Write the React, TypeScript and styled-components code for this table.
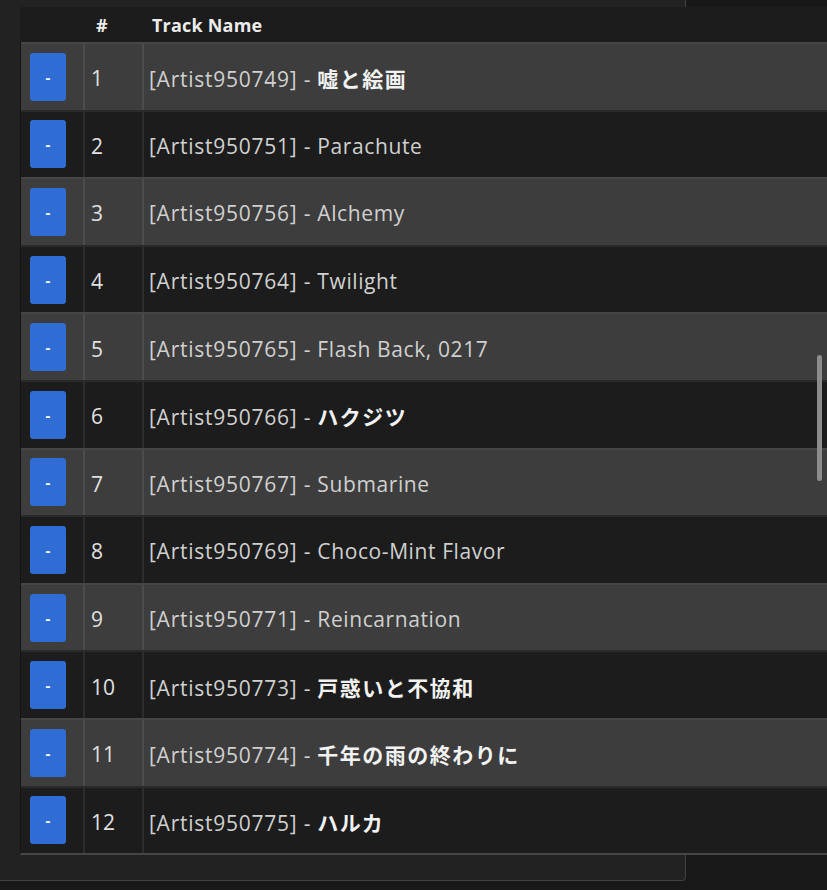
import React from "react";
import styled, { createGlobalStyle } from "styled-components";

const Global = createGlobalStyle`
  html, body { margin: 0; padding: 0; background: #181818; overflow: hidden; }
  body { font-family: "Open Sans", "Noto Sans CJK JP", sans-serif; }
  * { box-sizing: border-box; }
`;

type Track = { artist: string; title: string; jp?: boolean };

const tracks: Track[] = [
  { artist: "Artist950749", title: "嘘と絵画", jp: true },
  { artist: "Artist950751", title: "Parachute" },
  { artist: "Artist950756", title: "Alchemy" },
  { artist: "Artist950764", title: "Twilight" },
  { artist: "Artist950765", title: "Flash Back, 0217" },
  { artist: "Artist950766", title: "ハクジツ", jp: true },
  { artist: "Artist950767", title: "Submarine" },
  { artist: "Artist950769", title: "Choco-Mint Flavor" },
  { artist: "Artist950771", title: "Reincarnation" },
  { artist: "Artist950773", title: "戸惑いと不協和", jp: true },
  { artist: "Artist950774", title: "千年の雨の終わりに", jp: true },
  { artist: "Artist950775", title: "ハルカ", jp: true },
];

const Stage = styled.div`
  position: relative;
  width: 827px;
  height: 890px;
  overflow: hidden;
`;

const Panel = styled.div`
  width: 686px;
  height: 881px;
  background: #222222;
  border-right: 1px solid #414141;
  border-bottom: 1px solid #414141;
  border-bottom-right-radius: 4px;
  padding: 7px 0 0 20px;
`;

const Table = styled.div`
  width: 900px;
  display: flex;
  flex-direction: column;
`;

const Header = styled.div`
  display: grid;
  grid-template-columns: 65px 59px 1fr;
  height: 35px;
  background: #1c1c1c;
  align-items: center;
  color: #ececec;
  font-weight: 700;
  font-size: 18px;
  letter-spacing: 0.2px;
`;

const HeadCell = styled.div<{ $pad?: number }>`
  padding-left: ${(p) => p.$pad ?? 0}px;
`;

const Body = styled.div`
  display: flex;
  flex-direction: column;
  border-left: 1px solid #151515;
  border-bottom: 2px solid #464646;
`;

const Row = styled.div<{ $odd: boolean }>`
  display: grid;
  grid-template-columns: 64px 59px 1fr;
  height: 67.6px;
  background: ${(p) => (p.$odd ? "#3d3d3d" : "#1c1c1c")};
  border-top: 2px solid ${(p) => (p.$odd ? "#464646" : "#2a2a2a")};
`;

const Cell = styled.div`
  display: flex;
  align-items: center;
  border-right: 2px solid rgba(255, 255, 255, 0.08);
  min-width: 0;
`;

const ButtonCell = styled(Cell)`
  padding-left: 9px;
`;

const RemoveButton = styled.button`
  width: 36px;
  height: 48px;
  border: none;
  border-radius: 3px;
  background: #2f6dd4;
  color: #ffffff;
  font-family: "Open Sans", sans-serif;
  font-size: 15px;
  font-weight: 700;
  padding: 0;
  display: flex;
  align-items: center;
  justify-content: center;
`;

const NumCell = styled(Cell)`
  padding: 3px 0 0 6px;
  font-size: 21px;
  color: #e0e0e0;
`;

const NameCell = styled(Cell)`
  padding: 3px 0 0 5px;
  border-right: none;
`;

const NameText = styled.span`
  font-size: 21px;
  letter-spacing: 0.75px;
  color: #d0d0d0;
  white-space: pre;
`;

const Title = styled.span<{ $jp?: boolean }>`
  font-weight: ${(p) => (p.$jp ? 700 : 400)};
  color: ${(p) => (p.$jp ? "#f2f2f2" : "#d0d0d0")};
  font-family: ${(p) =>
    p.$jp ? '"Noto Sans CJK JP", sans-serif' : '"Open Sans", sans-serif'};
  font-size: 21px;
  letter-spacing: ${(p) => (p.$jp ? "1.5px" : "0.6px")};
`;

const Scrollbar = styled.div`
  position: absolute;
  left: 817px;
  top: 355px;
  width: 5px;
  height: 126px;
  border-radius: 3px;
  background: #8c8c8c;
`;

export default function App() {
  return (
    <>
      <Global />
      <Stage>
        <Panel>
          <Table>
            <Header>
              <HeadCell />
              <HeadCell $pad={11}>#</HeadCell>
              <HeadCell $pad={8}>Track Name</HeadCell>
            </Header>
            <Body>
              {tracks.map((t, i) => (
                <Row key={i} $odd={i % 2 === 0}>
                  <ButtonCell>
                    <RemoveButton>-</RemoveButton>
                  </ButtonCell>
                  <NumCell>{i + 1}</NumCell>
                  <NameCell>
                    <NameText>
                      {`[${t.artist}] - `}
                      <Title $jp={t.jp}>{t.title}</Title>
                    </NameText>
                  </NameCell>
                </Row>
              ))}
            </Body>
          </Table>
        </Panel>
        <Scrollbar />
      </Stage>
    </>
  );
}
